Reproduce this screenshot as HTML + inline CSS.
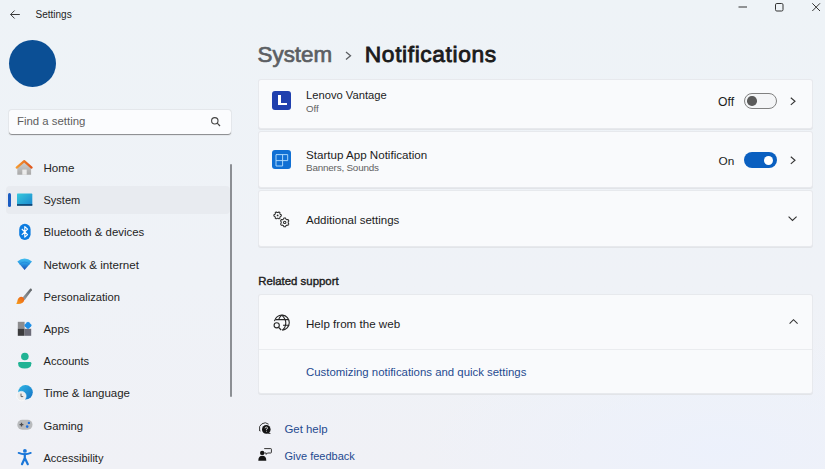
<!DOCTYPE html>
<html><head><meta charset="utf-8">
<style>
html,body{margin:0;padding:0;}
body{width:825px;height:469px;overflow:hidden;position:relative;background:#eff2f7;background-image:radial-gradient(ellipse 300px 120px at 720px 450px,rgba(236,241,252,0.9),rgba(236,241,252,0)),linear-gradient(180deg,#eef3f7 0%,#eff2f7 60%,#f0f1f6 100%);font-family:"Liberation Sans",sans-serif;color:#1c1c1c;}
.t{position:absolute;line-height:1;white-space:nowrap;}
.a{position:absolute;}
.card{position:absolute;left:259px;width:553px;background:#f9fafc;border-radius:2px;box-shadow:0 0 0 1px #e7e9ed, 0 1px 0 1px #e2e4e8;}
svg{position:absolute;overflow:visible;}
</style></head><body>

<!-- title bar -->
<svg style="left:10px;top:10px" width="10" height="9" viewBox="0 0 10 9"><path d="M0.6 4.5H9.8M4.6 0.5L0.6 4.5L4.6 8.5" fill="none" stroke="#3a3a3a" stroke-width="1"/></svg>
<div class="t" style="left:35.5px;top:9.5px;font-size:10px;color:#242424">Settings</div>
<svg style="left:738px;top:6px" width="10" height="2"><path d="M0.5 1H9" stroke="#333" stroke-width="1"/></svg>
<svg style="left:775px;top:3px" width="9" height="9"><rect x="0.5" y="0.5" width="7.5" height="7.5" rx="1.3" fill="none" stroke="#333" stroke-width="1"/></svg>
<svg style="left:812px;top:3px" width="9" height="9"><path d="M0.3 0.3L8 8M8 0.3L0.3 8" stroke="#333" stroke-width="1"/></svg>

<!-- avatar -->
<div class="a" style="left:9px;top:40px;width:47px;height:47px;border-radius:50%;background:#0b4f95"></div>

<!-- search -->
<div class="a" style="left:9px;top:109.5px;width:222px;height:25px;background:#fbfcfe;border-radius:3px;box-shadow:0 0 0 1px #e4e7eb, inset 0 -1px 0 #8f9194"></div>
<div class="t" style="left:17px;top:116px;font-size:11.4px;color:#5d5d5d">Find a setting</div>
<svg style="left:211px;top:117px" width="10" height="10" viewBox="0 0 10 10"><circle cx="3.8" cy="3.8" r="3.2" fill="none" stroke="#444" stroke-width="1.1"/><path d="M6.2 6.2L9 9" stroke="#444" stroke-width="1.2"/></svg>

<!-- nav -->
<div class="a" style="left:6px;top:186px;width:224px;height:27.5px;background:#e8ebf0;border-radius:4px"></div>
<div class="a" style="left:8px;top:193px;width:3px;height:13.5px;background:#1a5cc2;border-radius:2px"></div>
<div class="a" style="left:230px;top:164px;width:2px;height:233px;background:#8c8f94;border-radius:1px"></div>

<div class="t" style="left:43.5px;top:161.9px;font-size:11.6px;color:#242424">Home</div>
<div class="t" style="left:43.5px;top:195.2px;font-size:11.0px;color:#242424">System</div>
<div class="t" style="left:43.5px;top:227.2px;font-size:11.4px;color:#242424">Bluetooth &amp; devices</div>
<div class="t" style="left:43.5px;top:259.0px;font-size:11.6px;color:#242424">Network &amp; internet</div>
<div class="t" style="left:43.5px;top:291.5px;font-size:11.2px;color:#242424">Personalization</div>
<div class="t" style="left:43.5px;top:323.6px;font-size:11.4px;color:#242424">Apps</div>
<div class="t" style="left:43.5px;top:356.2px;font-size:11.1px;color:#242424">Accounts</div>
<div class="t" style="left:43.5px;top:388.0px;font-size:11.5px;color:#242424">Time &amp; language</div>
<div class="t" style="left:43.5px;top:421.1px;font-size:11.3px;color:#242424">Gaming</div>
<div class="t" style="left:43.5px;top:452.8px;font-size:11.0px;color:#242424">Accessibility</div>

<!-- nav icons placeholders -->
<svg style="left:0;top:0;z-index:5" width="825" height="469" viewBox="0 0 825 469">
<defs>
<linearGradient id="gsys" x1="0" y1="0" x2="1" y2="1"><stop offset="0" stop-color="#36c9dc"/><stop offset="1" stop-color="#1b86cf"/></linearGradient>
<linearGradient id="gwifi" x1="0" y1="0" x2="0" y2="1"><stop offset="0" stop-color="#45c0f0"/><stop offset="0.45" stop-color="#2a9ae4"/><stop offset="1" stop-color="#1b4fb6"/></linearGradient>
<linearGradient id="ghouse" x1="0" y1="0" x2="0" y2="1"><stop offset="0" stop-color="#d0d0d0"/><stop offset="1" stop-color="#a9a9a9"/></linearGradient>
<linearGradient id="groof" x1="0" y1="0" x2="1" y2="0"><stop offset="0" stop-color="#f59a2f"/><stop offset="1" stop-color="#e0561c"/></linearGradient>
<linearGradient id="gbrush" x1="1" y1="0" x2="0" y2="1"><stop offset="0" stop-color="#5e6266"/><stop offset="1" stop-color="#9aa0a4"/></linearGradient>
<linearGradient id="gtip" x1="0" y1="1" x2="1" y2="0"><stop offset="0" stop-color="#f6a21c"/><stop offset="1" stop-color="#ea5a16"/></linearGradient>
<linearGradient id="gglobe" x1="0" y1="0" x2="1" y2="1"><stop offset="0" stop-color="#30b8e6"/><stop offset="1" stop-color="#1470c4"/></linearGradient>
</defs>
<!-- Home -->
<path d="M17.3 167.4 L24.2 161.4 L31.1 167.4 V174.8 H17.3 Z" fill="url(#ghouse)"/>
<path d="M22.3 169.6 H26.7 V174.8 H22.3 Z" fill="#ececec"/>
<path d="M16.7 167.6 L24.2 161.1 L31.6 167.6" fill="none" stroke="url(#groof)" stroke-width="2.2" stroke-linejoin="round" stroke-linecap="round"/>
<!-- System -->
<rect x="17" y="193.6" width="15.3" height="12" fill="url(#gsys)" rx="0.6"/>
<rect x="17" y="204.2" width="15.3" height="1.5" fill="#0c3a66"/>
<!-- Bluetooth -->
<rect x="19.2" y="223.8" width="11.4" height="16.2" rx="5.7" fill="#0d7ce0"/>
<path d="M21.8 229 L27.6 234.6 L24.8 237.2 V226.6 L27.6 229.2 L21.8 234.8" fill="none" stroke="#fff" stroke-width="1.1" stroke-linejoin="round"/>
<!-- WiFi -->
<path d="M17.3 261.6 Q24.6 255.2 32 261.6 L24.6 269.9 Z" fill="url(#gwifi)"/>
<path d="M19.6 264.2 Q24.6 260 29.7 264.2" fill="none" stroke="#2187d8" stroke-width="0.9" opacity="0.8"/>
<!-- Brush -->
<path d="M30.3 288.6 Q32.2 288.2 31.8 290.2 L24.6 300.2 L22.2 298 Z" fill="url(#gbrush)"/>
<path d="M19.2 297.4 Q21.6 296 23.8 298.2 Q25 300.8 22.6 302.8 Q19.6 304.6 16.2 303.8 Q17.4 302 17.6 300 Q17.8 298.4 19.2 297.4 Z" fill="url(#gtip)"/>
<!-- Apps -->
<rect x="17.8" y="321.8" width="6.8" height="6.8" fill="#8d8d8f"/>
<rect x="17.8" y="328.6" width="6.8" height="7.2" fill="#3b3b3d"/>
<rect x="24.8" y="328.8" width="6.4" height="7" fill="#6c6c78"/>
<rect x="25.1" y="322.5" width="5.8" height="5.8" rx="1.3" fill="#1f8fe6" transform="rotate(45 28 325.4)"/>
<!-- Accounts -->
<circle cx="24.85" cy="356.5" r="3.8" fill="#20b394"/>
<path d="M18.1 363.2 Q18.1 361.9 19.4 361.9 H30.1 Q31.4 361.9 31.4 363.2 Q31.4 368.6 24.75 368.6 Q18.1 368.6 18.1 363.2 Z" fill="#20b394"/>
<!-- Time -->
<circle cx="25.5" cy="392.3" r="7.3" fill="url(#gglobe)"/>
<circle cx="21.4" cy="396.1" r="4.7" fill="#ececec" stroke="#ffffff" stroke-width="0.6"/>
<path d="M21 393.6 V396.6 H23.2" fill="none" stroke="#555" stroke-width="0.9"/>
<!-- Gaming -->
<rect x="17.3" y="419.8" width="15.2" height="9.9" rx="4.9" fill="#b9bbbd"/>
<path d="M19.6 424.7 H23.4 M21.5 422.8 V426.6" stroke="#4d4d4f" stroke-width="1.3"/>
<circle cx="28.9" cy="422.9" r="1.2" fill="#1a6fe0"/>
<circle cx="27.2" cy="426.6" r="1.3" fill="#1a6fe0"/>
<!-- Accessibility -->
<circle cx="24.9" cy="450.9" r="1.9" fill="#1a76d8"/>
<path d="M18.6 452.9 Q24.8 455.6 30.8 452.9" fill="none" stroke="#1a76d8" stroke-width="1.8" stroke-linecap="round"/>
<path d="M24.8 454 V458.2 M24.8 458 L22 464.2 M24.8 458 L27.8 464.2" fill="none" stroke="#1a76d8" stroke-width="2.2" stroke-linecap="round"/>
<!-- Startup grid -->
<path d="M276 154.6 H287.7 V160.6 H276 M276 154.6 V166 H282.6 V154.6" fill="none" stroke="#b8e0ff" stroke-width="0.9"/>
<!-- gears -->
<g fill="none" stroke="#2a2a2a" stroke-width="1.05" stroke-linejoin="round">
<path d="M281.30 215.40 L281.29 215.72 L281.20 216.04 L280.79 216.25 L280.36 216.41 L280.23 216.63 L280.11 216.85 L279.98 217.06 L279.85 217.29 L279.93 217.73 L279.95 218.20 L279.72 218.43 L279.45 218.60 L279.16 218.75 L278.85 218.84 L278.45 218.59 L278.11 218.30 L277.85 218.29 L277.60 218.30 L277.35 218.29 L277.09 218.30 L276.75 218.59 L276.35 218.84 L276.04 218.75 L275.75 218.60 L275.48 218.43 L275.25 218.20 L275.27 217.73 L275.35 217.29 L275.22 217.06 L275.09 216.85 L274.97 216.63 L274.84 216.41 L274.41 216.25 L274.00 216.04 L273.91 215.72 L273.90 215.40 L273.91 215.08 L274.00 214.76 L274.41 214.55 L274.84 214.39 L274.97 214.17 L275.09 213.95 L275.22 213.74 L275.35 213.51 L275.27 213.07 L275.25 212.60 L275.48 212.37 L275.75 212.20 L276.04 212.05 L276.35 211.96 L276.75 212.21 L277.09 212.50 L277.35 212.51 L277.60 212.50 L277.85 212.51 L278.11 212.50 L278.45 212.21 L278.85 211.96 L279.16 212.05 L279.45 212.20 L279.72 212.37 L279.95 212.60 L279.93 213.07 L279.85 213.51 L279.98 213.74 L280.11 213.95 L280.23 214.17 L280.36 214.39 L280.79 214.55 L281.20 214.76 L281.29 215.08Z"/>
<circle cx="277.6" cy="215.4" r="0.9" fill="#2a2a2a" stroke="none"/>
<path d="M288.20 222.40 L288.19 222.71 L288.19 223.02 L288.52 223.42 L288.79 223.89 L288.69 224.26 L288.51 224.60 L288.30 224.92 L288.04 225.20 L287.49 225.19 L286.98 225.12 L286.71 225.27 L286.45 225.43 L286.18 225.57 L285.91 225.73 L285.72 226.22 L285.46 226.69 L285.08 226.78 L284.70 226.80 L284.32 226.78 L283.94 226.69 L283.68 226.22 L283.49 225.73 L283.22 225.57 L282.95 225.43 L282.69 225.27 L282.42 225.12 L281.91 225.19 L281.36 225.20 L281.10 224.92 L280.89 224.60 L280.71 224.26 L280.61 223.89 L280.88 223.42 L281.21 223.02 L281.21 222.71 L281.20 222.40 L281.21 222.09 L281.21 221.78 L280.88 221.38 L280.61 220.91 L280.71 220.54 L280.89 220.20 L281.10 219.88 L281.36 219.60 L281.91 219.61 L282.42 219.68 L282.69 219.53 L282.95 219.37 L283.22 219.23 L283.49 219.07 L283.68 218.58 L283.94 218.11 L284.32 218.02 L284.70 218.00 L285.08 218.02 L285.46 218.11 L285.72 218.58 L285.91 219.07 L286.18 219.23 L286.45 219.37 L286.71 219.53 L286.98 219.68 L287.49 219.61 L288.04 219.60 L288.30 219.88 L288.51 220.20 L288.69 220.54 L288.79 220.91 L288.52 221.38 L288.19 221.78 L288.19 222.09Z"/>
<circle cx="284.7" cy="222.4" r="1.2"/>
</g>
<!-- globe search -->
<g fill="none" stroke="#262626" stroke-width="1.1">
<path d="M274.4 321.2 A7.5 7.5 0 1 1 282.2 330.1"/>
<path d="M281.8 315.1 Q279.4 317 278.6 319.6"/>
<path d="M281.8 315.1 Q285.8 318.8 285.8 323 Q285.8 327.2 282.6 330.1"/>
<path d="M275.4 319.6 H288.4 M283 325.3 H289.2"/>
<circle cx="276.7" cy="325.3" r="2.6"/>
<path d="M278.6 327.3 L281.2 330" stroke-width="1.2"/>
</g>
<!-- get help -->
<path d="M259.6 430 A5.6 5.6 0 0 1 268.6 424.2" fill="none" stroke="#3a3a3a" stroke-width="1"/>
<path d="M259 430.4 L260.6 431" stroke="#3a3a3a" stroke-width="1"/>
<circle cx="266.3" cy="429.4" r="4.3" fill="#141414"/>
<path d="M268.8 432.2 L271 434 L267.4 433.6 Z" fill="#141414"/>
<path d="M265.1 428.3 Q265.2 427 266.3 427 Q267.5 427 267.5 428.1 Q267.5 429 266.4 429.4 V430.2" fill="none" stroke="#fff" stroke-width="0.8"/>
<circle cx="266.4" cy="431.4" r="0.45" fill="#fff"/>
<!-- give feedback -->
<circle cx="262.2" cy="452.9" r="2.2" fill="#141414"/>
<path d="M258.3 460.8 Q258.3 455.8 262.3 455.8 Q266.3 455.8 266.3 460.8 Z" fill="#141414"/>
<path d="M264.2 448.6 H270.8 Q271.4 448.6 271.4 449.2 V452.4 Q271.4 453 270.8 453 H267.4 L266.2 454.4 V453 H264.2" fill="none" stroke="#2a2a2a" stroke-width="0.95" stroke-linejoin="round"/>
</svg>

<!-- header -->
<div class="t" style="left:257.5px;top:43.6px;font-size:22.4px;font-weight:400;-webkit-text-stroke:0.7px #5c5f63;color:#5c5f63">System</div>
<svg style="left:345px;top:51px" width="8" height="10"><path d="M1 1L5.5 4.7L1 8.4" fill="none" stroke="#5c5f63" stroke-width="1.3"/></svg>
<div class="t" style="left:364.8px;top:43.2px;font-size:22.8px;font-weight:400;letter-spacing:0.6px;-webkit-text-stroke:0.85px #1b1b1b;color:#1b1b1b">Notifications</div>

<!-- cards -->
<div class="card" style="top:80px;height:48px"></div>
<div class="card" style="top:132px;height:55px"></div>
<div class="card" style="top:191px;height:55px"></div>
<div class="card" style="top:295px;height:98px"></div>
<div class="a" style="left:259px;top:349px;width:553px;height:1px;background:#eaecef"></div>

<!-- card1 -->
<div class="a" style="left:272px;top:91px;width:19px;height:19px;background:#1f3fae;border-radius:3px"></div>
<div class="a" style="left:278.4px;top:95px;width:2.8px;height:10.2px;background:#fff"></div><div class="a" style="left:278.4px;top:102.6px;width:8.7px;height:2.6px;background:#fff"></div>
<div class="t" style="left:306px;top:89.8px;font-size:11.2px;color:#1c1c1c">Lenovo Vantage</div>
<div class="t" style="left:306px;top:103.9px;font-size:9.7px;color:#616161">Off</div>
<div class="t" style="left:718px;top:95.8px;font-size:12.2px;color:#1c1c1c">Off</div>
<div class="a" style="left:744px;top:93px;width:31px;height:14px;border:1px solid #808080;border-radius:9px;background:#f4f5f7"></div>
<div class="a" style="left:747px;top:96px;width:9.5px;height:9.5px;border-radius:50%;background:#5a5a5a"></div>
<svg style="left:790px;top:97px" width="7" height="9"><path d="M0.8 0.8L5 4.2L0.8 7.8" fill="none" stroke="#333" stroke-width="1.1"/></svg>

<!-- card2 -->
<div class="a" style="left:272px;top:150.2px;width:19.2px;height:19px;background:#1170d4;border-radius:3px"></div>
<div class="t" style="left:306px;top:149.3px;font-size:11.6px;color:#1c1c1c">Startup App Notification</div>
<div class="t" style="left:306px;top:162.8px;font-size:9.9px;letter-spacing:-0.2px;color:#616161">Banners, Sounds</div>
<div class="t" style="left:718.5px;top:156.0px;font-size:11.8px;color:#1c1c1c">On</div>
<div class="a" style="left:744px;top:152px;width:33px;height:16px;border-radius:9px;background:#0a5fc0"></div>
<div class="a" style="left:763.5px;top:155.5px;width:9.5px;height:9.5px;border-radius:50%;background:#fff"></div>
<svg style="left:790px;top:156px" width="7" height="9"><path d="M0.8 0.8L5 4.2L0.8 7.8" fill="none" stroke="#333" stroke-width="1.1"/></svg>

<!-- card3 -->
<div class="t" style="left:306px;top:214.6px;font-size:11.5px;color:#1c1c1c">Additional settings</div>
<svg style="left:788px;top:216px" width="10" height="6"><path d="M0.6 0.6L4.5 4.5L8.6 0.6" fill="none" stroke="#333" stroke-width="1.1"/></svg>

<!-- related -->
<div class="t" style="left:258.2px;top:276.1px;font-size:11.4px;font-weight:400;-webkit-text-stroke:0.4px #1c1c1c;color:#1c1c1c">Related support</div>
<div class="t" style="left:306px;top:317.9px;font-size:11.6px;color:#1c1c1c">Help from the web</div>
<svg style="left:789px;top:319px" width="10" height="6"><path d="M0.6 4.6L4.5 0.7L8.6 4.6" fill="none" stroke="#333" stroke-width="1.1"/></svg>
<div class="t" style="left:306px;top:367.3px;font-size:11.4px;color:#1f4a90">Customizing notifications and quick settings</div>

<div class="t" style="left:284.5px;top:423.7px;font-size:11.4px;color:#1f4a90">Get help</div>
<div class="t" style="left:284.5px;top:450.8px;font-size:11.0px;color:#1f4a90">Give feedback</div>

</body></html>
